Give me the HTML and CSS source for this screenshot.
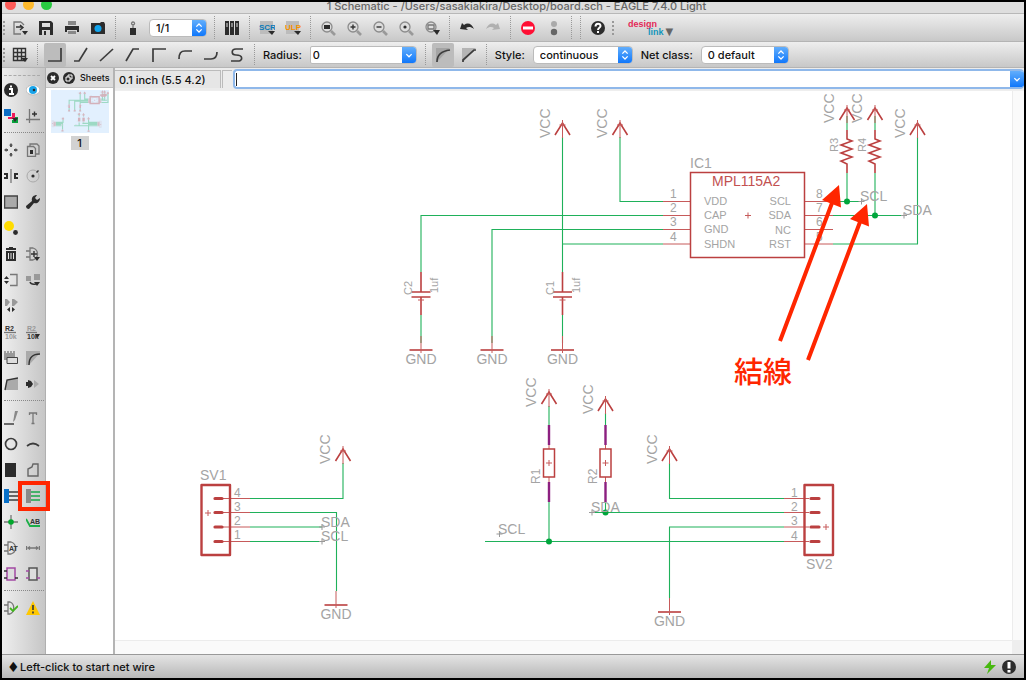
FILE: index.html
```
<!DOCTYPE html>
<html lang="en">
<head>
<meta charset="utf-8">
<title>1 Schematic - board.sch - EAGLE 7.4.0 Light</title>
<link rel="stylesheet" href="styles.css">
</head>
<body>
<div class="window">
  <header class="titlebar">
    <span class="light red"></span><span class="light yellow"></span><span class="light green"></span>
    <h1 class="title">1 Schematic - /Users/sasakiakira/Desktop/board.sch - EAGLE 7.4.0 Light</h1>
  </header>

  <div class="toolbar">
    <span class="handle"></span>
    <button class="tool" aria-label="Open"><svg viewBox="0 0 16 16"><path d="M9 2H2v12h7M9 2l3 3M12 11v2" class="g"/><path d="M4 7h6M8 5l3 2.500-3 2.500" class="d"/><path d="M10 11h6l-3 4z"/></svg></button>
    <button class="tool" aria-label="Save"><svg viewBox="0 0 16 16"><path fill-rule="evenodd" d="M1 1h12l2 2v12H1zM4 3v4h8V3zM4 10v5h8v-5zM6 11h2v4H6z"/></svg></button>
    <button class="tool" aria-label="Print"><svg viewBox="0 0 16 16"><path fill="#888" d="M4 1h8v4H4z"/><path d="M1 6h14v6h-2v-2H3v2H1z"/><path d="M4 11h8v3H4z" fill="#888"/></svg></button>
    <button class="tool" aria-label="CAM processor"><svg viewBox="0 0 16 16"><path d="M1 3h9l1-1h3l1 2v10H1z"/><circle cx="8" cy="8.500" r="3.500" fill="#12a5ee"/></svg></button>
    <span class="sep"></span>
    <button class="tool" aria-label="Board"><svg viewBox="0 0 16 16"><path d="M5 8h6v7H5z"/><path d="M8 8V4M8 2a1.500 1.500 0 1 0 .1 0" class="g"/></svg></button>
    <span class="combo sheet-no"><select aria-label="Sheet"><option>1/1</option></select><svg class="cap" viewBox="0 0 14 18"><path d="M4 7.500l3-3 3 3M4 10.500l3 3 3-3"/></svg></span>
    <span class="sep"></span>
    <button class="tool" aria-label="Use library"><svg viewBox="0 0 16 16"><path fill-rule="evenodd" d="M1 1h4v14H1zM6 1h4v14H6zM11 1h4v14h-4zM2.500 3v4h1V3zM7.500 3v4h1V3zM12.500 3v4h1V3z"/></svg></button>
    <span class="sep"></span>
    <button class="tool" aria-label="Script"><svg viewBox="0 0 16 16"><path fill="#bcbcbc" d="M1 1h13v13H1z"/><text x="0" y="10" class="tag blue">SCR</text><path d="M9 11h7l-3 4z"/></svg></button>
    <button class="tool" aria-label="ULP"><svg viewBox="0 0 16 16"><path fill="#bcbcbc" d="M1 1h13v13H1z"/><text x="0" y="10" class="tag orange">ULP</text><path d="M9 11h7l-3 4z"/></svg></button>
    <span class="sep"></span>
    <button class="tool" aria-label="Zoom to fit"><svg viewBox="0 0 16 16"><circle cx="7" cy="7" r="5" class="z"/><path d="M11 11l4 4" class="zh"/><path d="M4 5h6v4H4z"/></svg></button>
    <button class="tool" aria-label="Zoom in"><svg viewBox="0 0 16 16"><circle cx="7" cy="7" r="5" class="z"/><path d="M11 11l4 4" class="zh"/><path d="M4.500 7h5M7 4.500v5" class="d"/></svg></button>
    <button class="tool" aria-label="Zoom out"><svg viewBox="0 0 16 16"><circle cx="7" cy="7" r="5" class="z"/><path d="M11 11l4 4" class="zh"/><path d="M4.500 7h5" class="d"/></svg></button>
    <button class="tool" aria-label="Redraw"><svg viewBox="0 0 16 16"><circle cx="7" cy="7" r="5" class="z"/><path d="M11 11l4 4" class="zh"/><circle cx="7" cy="7" r="1.600"/></svg></button>
    <button class="tool" aria-label="Select zoom"><svg viewBox="0 0 16 16"><circle cx="7" cy="7" r="5" class="z"/><path d="M4 5h6v4H4z" class="g"/><path d="M9 10h7l-3 5z"/></svg></button>
    <span class="sep"></span>
    <button class="tool" aria-label="Undo"><svg viewBox="0 0 16 16"><path d="M1 9l2-6 2 2c4-3 8-1 10 4-4-3-6-2-8-1l2 2z"/></svg></button>
    <button class="tool" aria-label="Redo"><svg viewBox="0 0 16 16"><path fill="#b0b0b0" d="M15 9l-2-6-2 2C7 2 3 4 1 9c4-3 6-2 8-1l-2 2z"/></svg></button>
    <span class="sep"></span>
    <button class="tool" aria-label="Stop"><svg viewBox="0 0 16 16"><circle cx="8" cy="8" r="7" fill="#ff0f34"/><path fill="#fff" d="M3 6.500h10v3H3z"/></svg></button>
    <button class="tool" aria-label="Go"><svg viewBox="0 0 16 16"><circle cx="8" cy="4" r="3" fill="#aaa"/><circle cx="8" cy="12" r="3.200" fill="#666"/></svg></button>
    <span class="sep"></span><span class="sep"></span>
    <button class="tool" aria-label="Help"><svg viewBox="0 0 16 16"><circle cx="8" cy="8" r="7"/><path d="M5.500 6.500c0-4 5-3.500 5-.5 0 2-2.500 1.500-2.500 4M8 11v2" fill="none" stroke="#fff" stroke-width="2"/></svg></button>
    <span class="handle"></span>
    <a class="design" href="#"><span class="word-a">design</span><span class="word-b">link</span></a>
    <span class="drop">▼</span>
  </div>

  <div class="toolbar second">
    <span class="handle"></span>
    <button class="tool" aria-label="Grid"><svg viewBox="0 0 16 16"><path d="M1.500 1.500h12v12h-12zM5.500 1v13M9.500 1v13M1 5.500h13M1 9.500h13" class="d"/><path d="M9 11h7l-3 4z"/></svg></button>
    <span class="sep"></span>
    <button class="tool on" aria-label="Bend 0"><svg viewBox="0 0 16 16"><path d="M14 1v13H1" class="b"/></svg></button>
    <button class="tool" aria-label="Bend 1"><svg viewBox="0 0 16 16"><path d="M1 14h5l8-13" class="b"/></svg></button>
    <button class="tool" aria-label="Bend 2"><svg viewBox="0 0 16 16"><path d="M1 14L14 2" class="b"/></svg></button>
    <button class="tool" aria-label="Bend 3"><svg viewBox="0 0 16 16"><path d="M1 14L8 2h6" class="b"/></svg></button>
    <button class="tool" aria-label="Bend 4"><svg viewBox="0 0 16 16"><path d="M2 15V2h13" class="b"/></svg></button>
    <button class="tool" aria-label="Bend 5"><svg viewBox="0 0 16 16"><path d="M2 12c0-6 2-8 6-8h7" class="b"/></svg></button>
    <button class="tool" aria-label="Bend 6"><svg viewBox="0 0 16 16"><path d="M1 12h7c4 0 6-3 6-7" class="b"/></svg></button>
    <button class="tool" aria-label="Freehand"><svg viewBox="0 0 16 16"><path d="M14 2H7C2 2 2 8 7 8c8 0 6 6 3 6H2" class="b"/></svg></button>
    <span class="sep"></span>
    <label class="caption" for="radius">Radius:</label>
    <span class="combo radius"><input id="radius" value="0"><svg class="cap" viewBox="0 0 14 18"><path d="M4 8l3 3 3-3"/></svg></span>
    <span class="sep"></span>
    <button class="tool on" aria-label="Round miter"><svg viewBox="0 0 16 16"><path d="M1 1h14L2 15H1z" fill="#a4a4a4"/><path d="M2 15c0-7 4-11 13-12" class="b"/></svg></button>
    <button class="tool" aria-label="Straight miter"><svg viewBox="0 0 16 16"><path d="M1 1h14L2 15H1z" fill="#b4b4b4"/><path d="M2 15v-2L13 3h2" class="b"/></svg></button>
    <span class="sep"></span>
    <label class="caption" for="style">Style:</label>
    <span class="combo style"><select id="style"><option>continuous</option></select><svg class="cap" viewBox="0 0 14 18"><path d="M4 7.500l3-3 3 3M4 10.500l3 3 3-3"/></svg></span>
    <label class="caption" for="netclass">Net class:</label>
    <span class="combo netclass"><select id="netclass"><option>0 default</option></select><svg class="cap" viewBox="0 0 14 18"><path d="M4 7.500l3-3 3 3M4 10.500l3 3 3-3"/></svg></span>
  </div>

  <main class="main">
    <nav class="palette" aria-label="Commands">
      <span class="rule top"></span>
      <button aria-label="Info"><svg viewBox="0 0 14 14"><circle cx="7" cy="7" r="7"/><path d="M5 6h3v5M5 11h5M7 2.500v2" fill="none" stroke="#fff" stroke-width="2"/></svg></button>
      <button aria-label="Show"><svg viewBox="0 0 14 14"><ellipse cx="7" cy="7" rx="7" ry="5" fill="#fff" stroke="#bbb"/><circle cx="7" cy="7" r="4" fill="#18a4ea"/><circle cx="8" cy="7" r="1.300"/></svg></button>
      <button aria-label="Display"><svg viewBox="0 0 14 14"><path fill="#0a6cc4" d="M0 0h7v7H0z"/><path fill="#f0195a" d="M8 4h3v6H4V8h4z"/><path fill="#08a33c" d="M11 8h3v6H8v-3h3z"/><path d="M8 9h6l-3 4z"/></svg></button>
      <button aria-label="Mark"><svg viewBox="0 0 14 14"><path d="M3.500 0v14M0 10.500h14" class="g"/><path d="M6 5h5M8.500 2.500v5" class="d"/></svg></button>
      <span class="rule"></span>
      <button aria-label="Move"><svg viewBox="0 0 14 14"><path d="M7 0l2 2.500H8V4H6V2.500H5zM7 14l2-2.500H8V10H6v1.500H5zM0 7l2.500-2v1H4v2H2.500v1zM14 7l-2.500-2v1H10v2h1.500v1z" fill="#555"/></svg></button>
      <button aria-label="Copy"><svg viewBox="0 0 14 14"><path d="M4 3V1h7l2 2v8h-3M1.500 3.500h6l2 2v8h-8z" class="g"/><path d="M4 7h3v4H4z"/></svg></button>
      <button aria-label="Mirror"><svg viewBox="0 0 14 14"><path d="M7 0v14" class="g"/><path d="M0 4h4v6H0V8h2V6H0zM14 4h-4v6h4V8h-2V6h2z"/></svg></button>
      <button aria-label="Rotate"><svg viewBox="0 0 14 14"><circle cx="7" cy="7" r="6" fill="none" stroke="#aaa"/><circle cx="7" cy="7" r="1.600"/><path d="M10.500 3.500l2-2" class="d"/></svg></button>
      <button aria-label="Group"><svg viewBox="0 0 14 14"><path d="M.5 1h13v12H.5z" fill="#aaa" stroke="#444" stroke-width="1.500"/></svg></button>
      <button aria-label="Change"><svg viewBox="0 0 14 14"><path d="M0 11l6-5c-1-4 2-6 5-6L9 3l2 2 3-2c0 4-3 6-6 5l-5 6c-2 0-3-1-3-3z"/></svg></button>
      <button aria-label="Paste"><svg viewBox="0 0 14 14"><circle cx="5" cy="5" r="5" fill="#ffdc00"/><circle cx="11.500" cy="11.500" r="2.400"/></svg></button>
      <span></span>
      <button aria-label="Delete"><svg viewBox="0 0 14 14"><path fill-rule="evenodd" d="M2 1h3V0h4v1h3v2H2zM2 4h10v10H2zM4 6v6h1V6zM6.500 6v6h1V6zM9 6v6h1V6z"/></svg></button>
      <button aria-label="Add"><svg viewBox="0 0 14 14"><path d="M4 1h3c6 2 6 10 0 12H4zM0 4h4M0 10h4" class="g"/><path d="M5 7h6M8 4v6" class="d"/><path d="M8 10h6l-3 4z"/></svg></button>
      <button aria-label="Pinswap"><svg viewBox="0 0 14 14"><path d="M6 1.500h7v11H6" class="g"/><path d="M0 6l2.500-3L5 6zM0 8l2.500 3L5 8z"/></svg></button>
      <button aria-label="Replace"><svg viewBox="0 0 14 14"><path d="M0 3h5v5H0zM8 1h6v6H8z" fill="#999"/><path d="M4 9q1 3 6 2" class="d"/><path d="M8 9h6l-3 4z"/></svg></button>
      <button aria-label="Gateswap"><svg viewBox="0 0 14 14"><path d="M1 0h2l3 3-3 4H1zM8 0h2l4 3-4 4H8z" fill="#999"/><path d="M6 8v5l-3-2.500zM8 8v5l3-2.500z"/></svg></button>
      <span></span>
      <button aria-label="Name"><svg viewBox="0 0 14 14"><text x="1" y="6" class="mini">R2</text><path d="M0 7.500h12" class="g"/><text x="1" y="14" class="mini pale">10k</text></svg></button>
      <button aria-label="Value"><svg viewBox="0 0 14 14"><text x="1" y="6" class="mini pale">R2</text><path d="M0 7.500h11" class="g"/><text x="1" y="14" class="mini">10k</text><path d="M9 9h5l-2.500 4z"/></svg></button>
      <button aria-label="Smash"><svg viewBox="0 0 14 14"><path d="M0 2h11v7H0z" fill="#999"/><path d="M1 0v2M4 0v2M7 0v2M10 0v2" class="g"/><path d="M3 6.500h10.500v6H3z" fill="#ddd" stroke="#444"/></svg></button>
      <button aria-label="Miter"><svg viewBox="0 0 14 14"><path d="M0 0h14v2L3 14H0z" fill="#aaa"/><path d="M3 14C3 6 7 3 14 3" class="d"/></svg></button>
      <button aria-label="Split"><svg viewBox="0 0 14 14"><path d="M3 3l11-2v12H1z" fill="#aaa"/><path d="M1 13L3 3l11-2" class="d"/></svg></button>
      <button aria-label="Invoke"><svg viewBox="0 0 14 14"><path d="M0 5h2V3l3 1 2 3-2 3-3 1V9H0z"/><path d="M8 3l5 4-5 4z" fill="#aaa"/></svg></button>
      <span class="rule"></span>
      <button aria-label="Wire"><svg viewBox="0 0 14 14"><path d="M0 13h10" class="d"/><path d="M11 0h3l-3 9-2 2z" fill="#888"/></svg></button>
      <button aria-label="Text"><svg viewBox="0 0 14 14"><path d="M3.500 4V2h7v2M7 2v11M5.500 12.500h3" class="g"/></svg></button>
      <button aria-label="Circle"><svg viewBox="0 0 14 14"><circle cx="7" cy="7" r="5.500" class="b"/></svg></button>
      <button aria-label="Arc"><svg viewBox="0 0 14 14"><path d="M1 9q6-5 12 0" class="b"/></svg></button>
      <button aria-label="Rect"><svg viewBox="0 0 14 14"><path d="M1 0h11v14H1z"/></svg></button>
      <button aria-label="Polygon"><svg viewBox="0 0 14 14"><path d="M2 13V6l4-2 1-3h5v12z" fill="none" stroke="#666" stroke-width="1.400"/></svg></button>
      <button aria-label="Bus"><svg viewBox="0 0 14 14"><path fill="#0870c8" d="M0 0h5v14H0z"/><path d="M5 3h9M5 7h9M5 11h9" class="b"/></svg></button>
      <button class="marked" aria-label="Net"><svg viewBox="0 0 14 14"><path fill="#8a8a8a" d="M0 0h5v14H0z"/><path d="M5 3h9M5 7h9M5 11h9" fill="none" stroke="#18a84a" stroke-width="1.600"/></svg></button>
      <button aria-label="Junction"><svg viewBox="0 0 14 14"><path d="M0 7h14M7 0v14" class="g"/><circle cx="7" cy="7" r="2.800" fill="#00a82c"/></svg></button>
      <button aria-label="Label"><svg viewBox="0 0 14 14"><path d="M0 4l4 7h10" fill="none" stroke="#1cae48" stroke-width="1.800"/><text x="4" y="9" class="mini">AB</text></svg></button>
      <button aria-label="Attribute"><svg viewBox="0 0 14 14"><path d="M4 1h3c6 2 6 10 0 12H4zM0 4h4M0 10h4" class="g"/><text x="5" y="10" class="mini">AT</text></svg></button>
      <button aria-label="Dimension"><svg viewBox="0 0 14 14"><path d="M.5 5v4M13.500 5v4M2 7h10M4 5.500L2 7l2 1.500M10 5.500L12 7l-2 1.500" class="g"/></svg></button>
      <button aria-label="Module"><svg viewBox="0 0 14 14"><path d="M3 1h8v12H3z" fill="#ddd" stroke="#a349a4" stroke-width="1.500"/><path d="M0 4h3M0 11h3M11 11h3" class="d"/></svg></button>
      <button aria-label="Port"><svg viewBox="0 0 14 14"><path d="M3 1h8v12H3z" fill="#ddd" stroke="#555" stroke-width="1.500"/><path d="M0 4h3M0 11h3M11 11h3" stroke="#a349a4" stroke-width="1.500"/></svg></button>
      <span class="rule"></span>
      <button aria-label="ERC"><svg viewBox="0 0 14 14"><path d="M4 1h2c5 2 5 10 0 12H4zM0 4h4M0 10h4" class="g"/><path d="M6 7l3 3 5-5" fill="none" stroke="#43b51e" stroke-width="1.800"/></svg></button>
      <button aria-label="Errors"><svg viewBox="0 0 14 14"><path d="M7 0l7 14H0z" fill="#ffc800"/><path d="M7 4v5M7 10.500v2" class="b"/></svg></button>
    </nav>

    <aside class="sheets">
      <div class="sheets-head">
        <button aria-label="Close"><svg viewBox="0 0 12 12"><circle cx="6" cy="6" r="6"/><path d="M4 4l4 4M8 4L4 8" stroke="#fff" stroke-width="1.800"/></svg></button>
        <button aria-label="Float"><svg viewBox="0 0 12 12"><circle cx="6" cy="6" r="6"/><path d="M3 5h4v4H3zM5 5V3h4v4H7" fill="none" stroke="#fff"/></svg></button>
        <h2>Sheets</h2>
      </div>
      <figure class="sheet">
        <svg viewBox="190 85 740 550" aria-hidden="true"><use href="#circuit"/></svg>
        <figcaption>1</figcaption>
      </figure>
    </aside>

    <section class="editor">
      <div class="command">
        <output class="coords">0.1 inch (5.5 4.2)</output>
        <span class="coords-end"></span>
        <span class="combo cmd"><input aria-label="Command line" value=""><svg class="cap" viewBox="0 0 14 18"><path d="M4 8l3 3 3-3"/></svg></span>
      </div>
      <div class="canvas">
        <svg class="drawing" width="897" height="549" viewBox="115 91 897 549">
          <defs>
            <g id="vcc"><path class="sym" d="M-7.500 12L0 0l7.500 12"/><path class="pin" d="M0-3v18M-3 2h6"/><text transform="translate(-13 15) rotate(-90)">VCC</text></g>
            <g id="gnd"><path class="sym" d="M-11.500 0h23"/><path class="pin" d="M0-14v17"/><text y="13.500" text-anchor="middle">GND</text></g>
            <g id="cap"><path class="sym" d="M0-20V0M-9.500 0h19M-9.500 5h19M0 5v18"/><path class="pin" d="M-3 8h6"/></g>
            <g id="zig"><path class="sym" d="M0 0v9l5 2-11 4 11 4-11 4 11 4-11 4 6 3v9"/></g>
            <g id="res"><path class="pin" d="M0 19v5M0 52v5M-3 38h6M0 35v6"/><path class="lead" d="M0 0v20M0 57v20"/><path class="pack" d="M-5.500 24h11v28h-11z"/></g>
            <path id="cross" class="mark" d="M-3 0h6M0-3v6"/>
          </defs>
          <g id="circuit">
            <path class="net" d="M421 272V215.500H663M492 343V229.500H663M562.500 272V137M562.500 244H663M620 137v64.500h43M421 315v28M562.500 315v28M833 201.500h28M833 215.500h71M833 244h84.500V137M847 116v14M875 116v14M847 173v28M875 173v42"/>
            <path class="net" d="M250 498.500h93V463M250 512.500h86.500V591M250 527h72M250 541.500h72M485 541.500h299M591 512.500h193M549 406v19M605.500 413v12M549 502v39M605.500 502v10M669.500 463v35.500H784M784 527H669.500v71"/>
            <path class="pin" d="M663 201.500h27M663 215.500h27M663 229.500h27M663 244h27M804 201.500h29M804 215.500h29M804 229.500h29M804 244h29M223 498.500h27M223 512.500h27M223 527h27M223 541.500h27M784 498.500h25M784 512.500h25M784 527h25M784 541.500h25M745 215.500h6M748 212.500v6M205 513h6M208 510v6M823 527h6M826 524v6"/>
            <path class="pack" d="M690.500 172.500h114v85h-114z"/>
            <path class="conn" d="M201.500 485h28.500v70h-28.500zM804.500 485h28.500v70h-28.500z"/>
            <path class="pad" d="M215 498.500h7M215 512.500h7M215 527h7M215 541.500h7M811 498.500h8M811 512.500h8M811 527h8M811 541.500h8"/>
            <use href="#vcc" x="562.500" y="123"/><use href="#vcc" x="620" y="123"/><use href="#vcc" x="847" y="108"/><use href="#vcc" x="875" y="108"/><use href="#vcc" x="917.500" y="123"/>
            <use href="#vcc" x="343" y="449"/><use href="#vcc" x="549" y="392"/><use href="#vcc" x="605.500" y="399"/><use href="#vcc" x="669.500" y="449"/>
            <use href="#gnd" x="421" y="350"/><use href="#gnd" x="492" y="350"/><use href="#gnd" x="562.500" y="350"/><use href="#gnd" x="336" y="605"/><use href="#gnd" x="669.500" y="612"/>
            <use href="#cap" x="421" y="292"/><use href="#cap" x="562.500" y="292"/>
            <use href="#zig" x="847" y="130"/><use href="#zig" x="875" y="130"/>
            <use href="#res" x="549" y="425"/><use href="#res" x="605.500" y="425"/>
            <use href="#cross" x="861.500" y="201.500"/><use href="#cross" x="904" y="215.500"/><use href="#cross" x="322" y="527"/><use href="#cross" x="322" y="541.500"/><use href="#cross" x="499.500" y="534"/><use href="#cross" x="592" y="512.500"/>
            <g class="node"><circle cx="847" cy="201.500" r="3"/><circle cx="875" cy="215.500" r="3"/><circle cx="549" cy="541.500" r="3"/><circle cx="605.500" cy="512.500" r="3"/></g>
            <text x="690" y="168">IC1</text><text x="200" y="480">SV1</text><text x="806" y="569">SV2</text>
            <text x="860" y="201">SCL</text><text x="903" y="215">SDA</text><text x="321" y="527">SDA</text><text x="321" y="541">SCL</text><text x="498" y="534">SCL</text><text x="591" y="512">SDA</text>
            <text class="part" x="712" y="186">MPL115A2</text>
            <g class="small"><text x="704" y="205">VDD</text><text x="704" y="219">CAP</text><text x="704" y="233">GND</text><text x="704" y="248">SHDN</text></g>
            <g class="small" text-anchor="end"><text x="791" y="205">SCL</text><text x="791" y="219">SDA</text><text x="791" y="234">NC</text><text x="791" y="248">RST</text></g>
            <g class="num"><text x="670" y="198">1</text><text x="670" y="212">2</text><text x="670" y="226">3</text><text x="670" y="241">4</text><text x="816" y="198">8</text><text x="816" y="212">7</text><text x="816" y="226">6</text><text x="816" y="241">5</text>
            <text x="234" y="497">4</text><text x="234" y="511">3</text><text x="234" y="525">2</text><text x="234" y="539">1</text><text x="791" y="497">1</text><text x="791" y="511">2</text><text x="791" y="525">3</text><text x="791" y="540">4</text>
            <text transform="translate(540 484) rotate(-90)">R1</text><text transform="translate(597 484) rotate(-90)">R2</text></g>
            <g class="small"><text transform="translate(412 295) rotate(-90)">C2</text><text transform="translate(438 293) rotate(-90)">1uf</text><text transform="translate(554 295) rotate(-90)">C1</text><text transform="translate(580 293) rotate(-90)">1uf</text><text transform="translate(838 152) rotate(-90)">R3</text><text transform="translate(866 152) rotate(-90)">R4</text></g>
          </g>
          <g class="note">
            <path class="shaft" d="M780 341L832 203M808 360L860 222"/>
            <path d="M839 185l-17 15 19 7.500zM867 204l-17 15 19 7.500z"/>
            <text x="734" y="383">結線</text>
          </g>
        </svg>
        <span class="scroll-v"></span>
        <span class="scroll-h"></span>
        <span class="corner"></span>
      </div>
    </section>
  </main>

  <footer class="status">
    <span class="diamond">♦</span><span class="hint">Left-click to start net wire</span>
    <svg viewBox="0 0 14 14"><path d="M8 0L1 8h5l-2 6 9-9H8z" fill="#47b80f"/></svg>
    <svg viewBox="0 0 14 14"><circle cx="7" cy="7" r="7"/><path d="M5.500 2h3v6.500h-3zM5.500 10h3v2.500h-3z" fill="#fff"/></svg>
  </footer>
</div>
</body>
</html>
```
FILE: styles.css
```
* { box-sizing: border-box; }
body {
  margin: 0;
  background: #000;
  color: #111;
  font: 500 11px/16px Inter, "Noto Sans CJK JP", sans-serif;
}
button { padding: 0; border: 0; background: none; display: flex; align-items: center; justify-content: center; }
svg { display: block; fill: #2c2c2c; }
svg .g { fill: none; stroke: #777; stroke-width: 1.3; }
svg .d { fill: none; stroke: #333; stroke-width: 1.4; }
svg .b { fill: none; stroke: #3c3c3c; stroke-width: 1.7; }
svg .z { fill: #ddd; stroke: #8c8c8c; stroke-width: 1.3; }
svg .zh { stroke: #999; stroke-width: 2.6; }
.tag { font: 700 8px "Liberation Sans", sans-serif; }
.tag.blue { fill: #0a79b8; }
.tag.orange { fill: #f59100; }
.mini { font: 700 7px "Liberation Sans", sans-serif; fill: #333; }
.mini.pale { fill: #999; }

.window {
  display: flex;
  flex-direction: column;
  min-height: 100vh;
  border: 2px solid #000;
  background: #fff;
}
.titlebar {
  display: flex;
  align-items: flex-end;
  gap: 7px;
  height: 12px;
  padding: 0 0 1px 3px;
  overflow: hidden;
  background: #dedede;
  border-bottom: 1px solid #b8b8b8;
}
.light { flex: none; width: 11px; height: 11px; margin-bottom: 2px; border-radius: 50%; }
.light.red { background: #fc5b57; }
.light.yellow { background: #fdb92d; }
.light.green { background: #29c941; }
.title { flex: 1; margin: 0 50px 0 0; font-size: 11px; font-weight: 500; line-height: 12px; text-align: center; color: #666; white-space: nowrap; }

.toolbar {
  display: flex;
  align-items: center;
  height: 28px;
  background: linear-gradient(#eee, #c8c8c8);
  border-bottom: 1px solid #b4b4b4;
}
.toolbar.second { height: 26px; }
.handle { width: 3px; height: 14px; margin: 0 1px; border-left: 2px dotted #999; }
.sep { width: 9px; align-self: stretch; display: flex; justify-content: center; }
.sep::before { content: ""; margin: 2px 0; border-left: 1px dotted #999; }
.tool { width: 26px; height: 24px; }
.tool svg { width: 16px; height: 16px; }
.tool.on { width: 22px; margin: 0 2px; background: #bcbcbc; border-radius: 2px; }
.combo {
  display: flex;
  height: 18px;
  background: #fff;
  border: 1px solid #bbb;
  border-radius: 4px;
  overflow: hidden;
}
.combo select, .combo input {
  flex: 1;
  min-width: 0;
  padding: 0 0 0 6px;
  border: 0;
  outline: 0;
  appearance: none;
  background: none;
  color: #111;
  font: inherit;
}
.combo .cap { flex: none; width: 14px; height: 100%; background: linear-gradient(#62aefc, #0f77fb); fill: none; stroke: #fff; stroke-width: 1.4; }
.sheet-no { width: 58px; margin: 0 3px; }
.caption { padding: 0 8px 0 4px; white-space: nowrap; }
.radius { width: 107px; margin-right: 4px; border-radius: 2px 4px 4px 2px; }
.radius input { padding-left: 2px; }
.style { width: 100px; margin-right: 4px; }
.netclass { width: 88px; }
.design { display: flex; flex-direction: column; padding-left: 12px; font: 700 9px/8px "Liberation Sans", sans-serif; text-decoration: none; }
.word-a { color: #e32857; }
.word-b { padding-left: 20px; color: #1295bb; }
.drop { padding: 8px 0 0 2px; color: #666; font: 10px/10px "DejaVu Sans", sans-serif; }

.main { flex: 1; display: flex; min-height: 0; }
.palette {
  flex: none;
  width: 44px;
  display: grid;
  grid-template-columns: 18px 26px;
  grid-auto-rows: min-content;
  background: linear-gradient(90deg, #eee, #c6c6c6);
  border-right: 1px solid #b0b0b0;
}
.palette button { height: 26px; position: relative; }
.palette button svg { width: 14px; height: 14px; }
.rule { grid-column: 1 / -1; height: 8px; padding-top: 3px; }
.rule::before { content: ""; display: block; margin: 0 2px; border-top: 1px dotted #888; }
.rule.top { height: 9px; padding-top: 7px; }
.rule.top::before { margin-right: 6px; border-top: 1px dashed #aaa; }
.marked::after { content: ""; position: absolute; inset: -2px -4px -2px -2px; border: 4px solid #ff2600; }

.sheets { flex: none; width: 69px; border-right: 2px solid #b4b4b4; background: #fff; }
.sheets-head { display: flex; align-items: center; gap: 4px; height: 20px; padding-left: 1px; background: #dcdcdc; border-bottom: 1px solid #c0c0c0; }
.sheets-head svg { width: 12px; height: 12px; }
.sheets-head h2 { margin: 0 0 0 1px; font-size: 9px; font-weight: 500; line-height: 16px; }
.sheet { margin: 0; padding: 2px 5px 0; display: flex; flex-direction: column; align-items: center; gap: 3px; }
.sheet svg { width: 58px; height: 43px; background: #e2f0fe; }
.sheet use { opacity: .35; }
.sheet figcaption { width: 18px; height: 14px; line-height: 14px; text-align: center; background: #d2d2d2; }

.editor { flex: 1; min-width: 0; display: flex; flex-direction: column; }
.command { display: flex; align-items: center; height: 23px; background: #ececec; border-bottom: 1px solid #eee; }
.coords { width: 106px; height: 18px; padding-left: 4px; line-height: 18px; background: #e6e6e6; border: 1px solid #bbb; border-width: 1px 1px 0 0; white-space: nowrap; }
.coords-end { width: 10px; height: 18px; margin: 0 1px; border-left: 1px solid #bbb; border-top: 1px solid #bbb; }
.cmd { flex: 1; height: 20px; border: 2px solid #8fb8ea; border-right: 0; }
.cmd input { padding-left: 2px; background: linear-gradient(#222, #222) 1px 2px / 1px 13px no-repeat; }
.canvas { flex: 1; display: grid; grid-template-columns: minmax(0, 1fr) 12px; grid-template-rows: minmax(549px, 1fr) 14px; }
.drawing { overflow: hidden; }
.scroll-v { background: #fafafa; border-left: 1px solid #ececec; }
.scroll-h { background: #fafafa; border-top: 1px solid #ececec; }
.corner { background: #eee; }

.net, .pin, .sym, .pack { vector-effect: non-scaling-stroke; }
.net { fill: none; stroke: #1fb15a; stroke-width: 1.1; }
.pin { fill: none; stroke: #c65a5a; stroke-width: 1; }
.sym { fill: none; stroke: #bb4040; stroke-width: 1.6; }
.pack { fill: none; stroke: #bb4040; stroke-width: 1.5; }
.conn { fill: none; stroke: #bb4040; stroke-width: 2.4; stroke-linejoin: round; }
.pad { stroke: #bb4040; stroke-width: 3.2; stroke-linecap: round; }
.lead { stroke: #8c2080; stroke-width: 2.4; }
.mark { stroke: #999; stroke-width: 1; }
.node { fill: #00a63c; }
#circuit text, #vcc text, #gnd text { font: 14px "Liberation Sans", sans-serif; fill: #a4a4a4; }
#circuit .small text { font-size: 11px; }
#circuit .num text { font-size: 12px; }
#circuit .part { fill: #c25050; }
.note { fill: #ff2600; }
.note .shaft { fill: none; stroke: #ff2600; stroke-width: 4; }
.note text { font: 500 29px "Noto Sans CJK JP", sans-serif; }

.status { display: flex; align-items: center; gap: 5px; height: 24px; padding: 0 8px 0 5px; background: linear-gradient(#e4e4e4, #b8b8b8); border-top: 1px solid #999; }
.status svg { width: 14px; height: 14px; }
.diamond { width: 8px; font: 14px/16px "DejaVu Sans", sans-serif; }
.hint { flex: 1; font-size: 11px; }
```
